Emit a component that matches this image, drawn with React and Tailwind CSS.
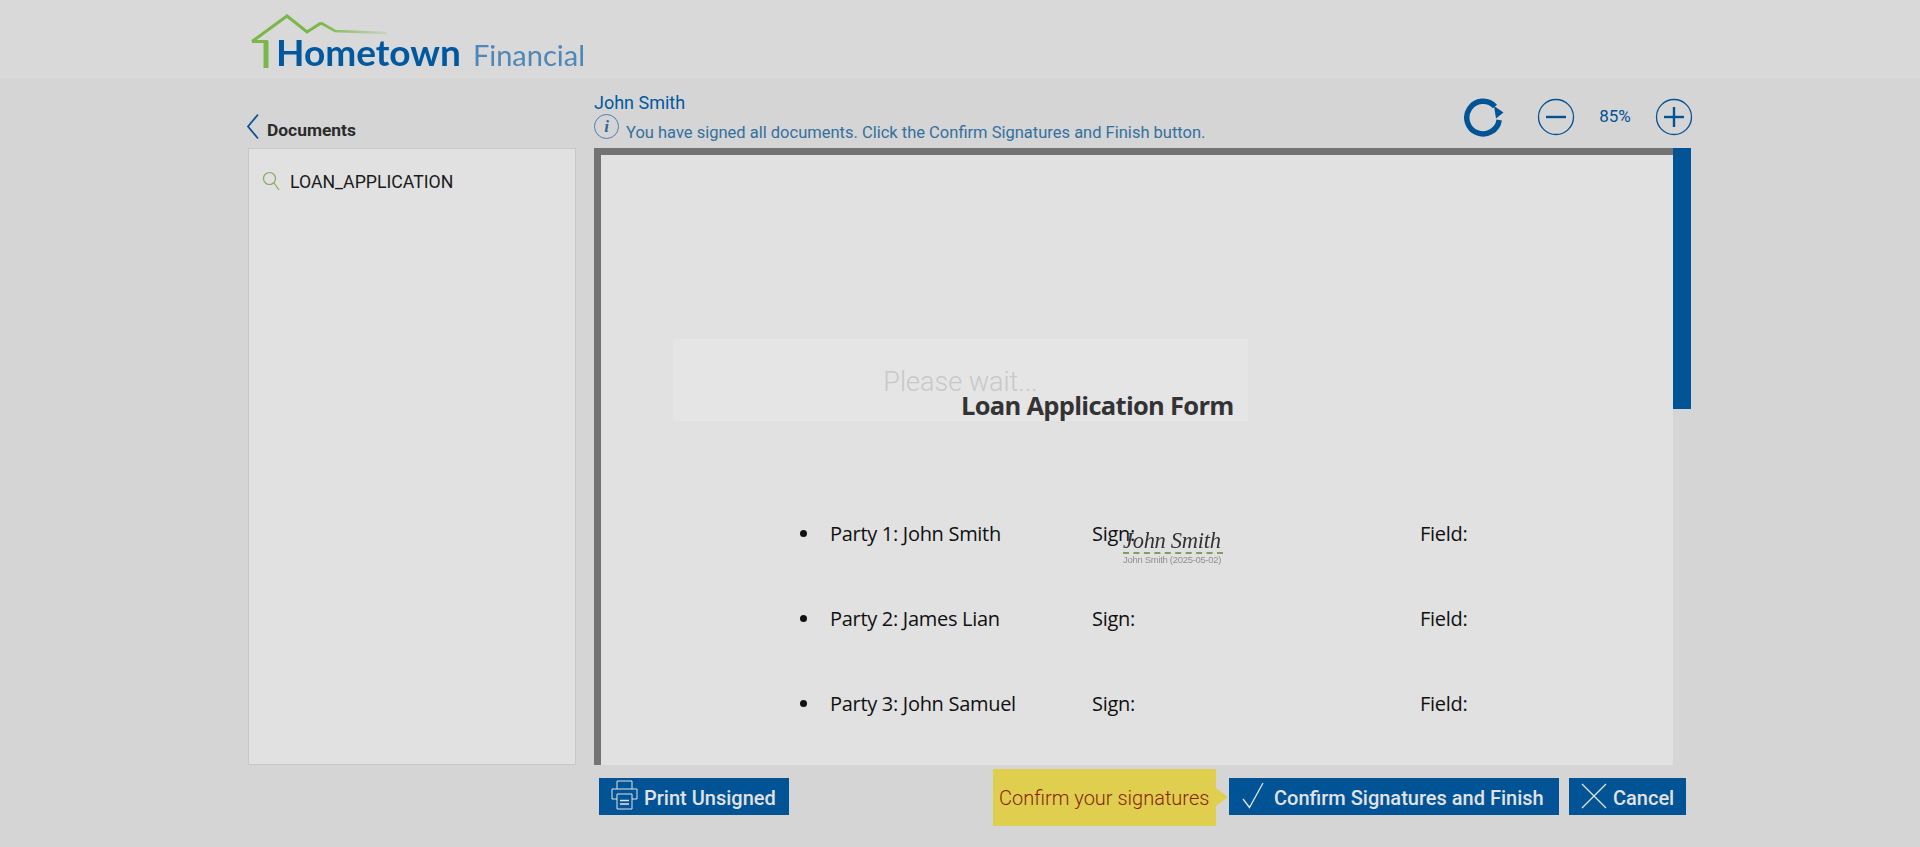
const roboto = { fontFamily: '"Roboto", "Liberation Sans", sans-serif' };

function Btn({ icon, label, className }) {
  return (
    <button className={"flex h-[37px] items-center bg-[#005395] text-[20px] text-[#e2e2e2] " + className} style={{ fontWeight: 500 }}>
      {icon}
      <span className="pt-[2px]">{label}</span>
    </button>
  );
}

function CircleIcon({ plus }) {
  return (
    <svg width="38" height="38" viewBox="0 0 38 38" fill="none" stroke="#005395">
      <circle cx="19" cy="19" r="17.5" strokeWidth="1.3" />
      <path d="M9 19H29" strokeWidth="2.4" />
      {plus && <path d="M19 9V29" strokeWidth="2.4" />}
    </svg>
  );
}

function Row({ party, signed }) {
  return (
    <div className="flex h-[85px] items-center text-[20px] text-[#101010]" style={{ fontFamily: '"Open Sans", sans-serif' }}>
      <span className="ml-[199px] mr-[23px] h-[7px] w-[7px] rounded-full bg-[#111]" />
      <span className="w-[262px] tracking-[-0.3px]">{party}</span>
      <span className="relative w-[328px] tracking-[-0.3px]">
        Sign:
        {signed && (
          <span className="absolute left-[31px] top-[8px] block w-[100px] blur-[0.4px]">
            <span className="block h-[25px] whitespace-nowrap text-[22.5px] italic leading-[28px] text-[#333]" style={{ fontFamily: '"Liberation Serif", serif' }}>John Smith</span>
            <span className="block border-t-2 border-dashed border-[#7fa05a]" />
            <span className="block whitespace-nowrap text-[9.5px] leading-[11px] text-[#909090]" style={{ fontFamily: '"Liberation Sans", sans-serif' }}>John Smith (2025-05-02)</span>
          </span>
        )}
      </span>
      <span className="tracking-[-0.3px]">Field:</span>
    </div>
  );
}

export default function App() {
  return (
    <div className="h-[847px] w-[1920px] overflow-hidden bg-[#d5d5d5]" style={roboto}>
      <header className="h-[78px] bg-[#d9d9d9] pl-[248px]">
        <div className="relative h-[78px] w-[340px]">
          <svg className="absolute left-[3px] top-[13px]" width="140" height="58" viewBox="0 0 140 58" fill="none">
            <defs>
              <linearGradient id="roofFade" x1="70" y1="0" x2="136" y2="0" gradientUnits="userSpaceOnUse">
                <stop offset="0" stopColor="#7ab648" />
                <stop offset="1" stopColor="#7ab648" stopOpacity="0.15" />
              </linearGradient>
            </defs>
            <path d="M70 10L84 18L136 20" stroke="url(#roofFade)" strokeWidth="2.6" />
            <path d="M1 28.5L36 3L56 19L70 10" stroke="#7ab648" strokeWidth="3" />
            <path d="M1 28.5H17" stroke="#7ab648" strokeWidth="3" />
            <path d="M15 28V55" stroke="#7ab648" strokeWidth="5" />
          </svg>
          <div className="absolute left-[28px] top-[32px] flex items-baseline whitespace-nowrap text-[#00599f] blur-[0.3px]" style={{ fontFamily: '"Lato", sans-serif' }}>
            <span className="text-[37px] font-bold leading-[40px]">Hometown</span>
            <span className="ml-[12px] text-[29px] leading-[40px] text-[#4d88b8]">Financial</span>
          </div>
        </div>
      </header>

      <main className="flex pl-[246px]">
        <aside className="w-[330px] pl-[2px]">
          <div className="flex h-[70px] items-end pb-[5px]">
            <svg className="mb-[3px] ml-[-2px]" width="14" height="27" viewBox="0 0 14 27" fill="none" stroke="#005395" strokeWidth="1.7">
              <path d="M12 1.5L2 13.5L12 25.5" />
            </svg>
            <span className="ml-[7px] text-[17.4px] font-bold text-[#2b2b2b]">Documents</span>
          </div>
          <div className="h-[617px] border border-[#c8c8c8] bg-[#e1e1e1] pl-[13px] pt-[20px]">
            <div className="flex items-center">
              <svg className="mb-[3px]" width="18" height="20" viewBox="0 0 18 20" fill="none" strokeWidth="1.2">
                <circle cx="7.5" cy="7.5" r="6" stroke="#8aa85a" />
                <path d="M12 12L17 19" stroke="#8aa85a" />
              </svg>
              <span className="ml-[10px] text-[17.7px] text-[#1a1a1a]">LOAN_APPLICATION</span>
            </div>
          </div>
        </aside>

        <section className="ml-[18px] w-[1097px]">
          <div className="flex h-[70px] items-start justify-between">
            <div className="pt-[14px]">
              <div className="text-[18px] leading-[22px] text-[#00599f]">John Smith</div>
              <div className="flex items-start">
                <span className="flex h-[25px] w-[25px] items-center justify-center rounded-full border border-[#4c80ad] text-[17px] font-bold italic leading-none text-[#33669c]" style={{ fontFamily: '"Liberation Serif", serif' }}>i</span>
                <span className="ml-[7px] mt-[8px] text-[16.5px] leading-[22px] text-[#33709f]">You have signed all documents. Click the Confirm Signatures and Finish button.</span>
              </div>
            </div>
            <div className="mr-[-2px] flex items-center pt-[19px]">
              <svg width="42" height="40" viewBox="0 0 42 40" fill="none">
                <path d="M32 9.5A16.3 16.3 0 1 0 36.2 23" stroke="#005395" strokeWidth="5.5" />
                <path d="M31 9L40.5 15.5L33 21.5Z" fill="#005395" />
              </svg>
              <span className="ml-[32px]"><CircleIcon /></span>
              <span className="mb-[1px] w-[80px] text-center text-[17px] text-[#005395]">85%</span>
              <CircleIcon plus />
            </div>
          </div>

          <div className="flex h-[617px]">
            <div className="relative h-[617px] w-[1079px] overflow-hidden border-l-[7px] border-t-[7px] border-[#737373] bg-[#e1e1e1]">
              <h1 className="relative z-10 whitespace-nowrap pl-[360px] pt-[233px] text-left text-[25.5px] font-bold leading-[34px] tracking-[-0.7px] text-[#333]" style={{ fontFamily: '"Open Sans", sans-serif' }}>Loan Application Form</h1>
              <div className="mt-[69px]">
                <Row party="Party 1: John Smith" signed />
                <Row party="Party 2: James Lian" />
                <Row party="Party 3: John Samuel" />
              </div>
              <div className="absolute left-[72px] top-[184px] flex h-[82px] w-[575px] items-center justify-center bg-[#ffffff]/15 pt-[5px]">
                <span className="text-[27px] font-light text-[#c8c8c8]">Please wait...</span>
              </div>
            </div>
            <div className="w-[18px]">
              <div className="h-[261px] bg-[#005395]" />
            </div>
          </div>

          <div className="mt-[4px] flex h-[57px] items-center justify-between pl-[5px] pr-[5px]">
            <div className="mb-[2px]">
              <Btn
                label="Print Unsigned"
                className="w-[190px] pl-[12px]"
                icon={
                  <svg className="mb-[4px] mr-[6px]" width="27" height="30" viewBox="0 0 27 30" fill="none" stroke="#e4e4e4" strokeWidth="1">
                    <path d="M6 9V1H21V9" />
                    <path d="M6 19H1V9H26V19H21" />
                    <path d="M6 14H21V29H6Z" />
                    <path d="M9 20.5H18M9 24H18" strokeWidth="1.4" />
                  </svg>
                }
              />
            </div>
            <div className="flex items-center">
              <div className="relative mr-[1px] flex h-[57px] w-[223px] items-center whitespace-nowrap bg-[#e0cf4e] pl-[6px] text-[20px] font-light text-[#8a1f12]">
                Confirm your signatures
                <span className="absolute left-full top-[19px] h-0 w-0 border-y-[9px] border-l-[12px] border-y-transparent border-l-[#e0cf4e]" />
              </div>
              <div className="mb-[2px] ml-[12px] flex gap-[10px]">
                <Btn
                  label="Confirm Signatures and Finish"
                  className="w-[330px] whitespace-nowrap pl-[13px]"
                  icon={
                    <svg className="mb-[3px] mr-[10px]" width="22" height="27" viewBox="0 0 22 27" fill="none" stroke="#e4e4e4" strokeWidth="1.3">
                      <path d="M1 17L7.5 25.5L21 1" />
                    </svg>
                  }
                />
                <Btn
                  label="Cancel"
                  className="w-[117px] pl-[12px]"
                  icon={
                    <svg className="mb-[2px] mr-[6px]" width="26" height="26" viewBox="0 0 26 26" fill="none" stroke="#e4e4e4" strokeWidth="1.3">
                      <path d="M1 1L25 25M25 1L1 25" />
                    </svg>
                  }
                />
              </div>
            </div>
          </div>
        </section>
      </main>
    </div>
  );
}
